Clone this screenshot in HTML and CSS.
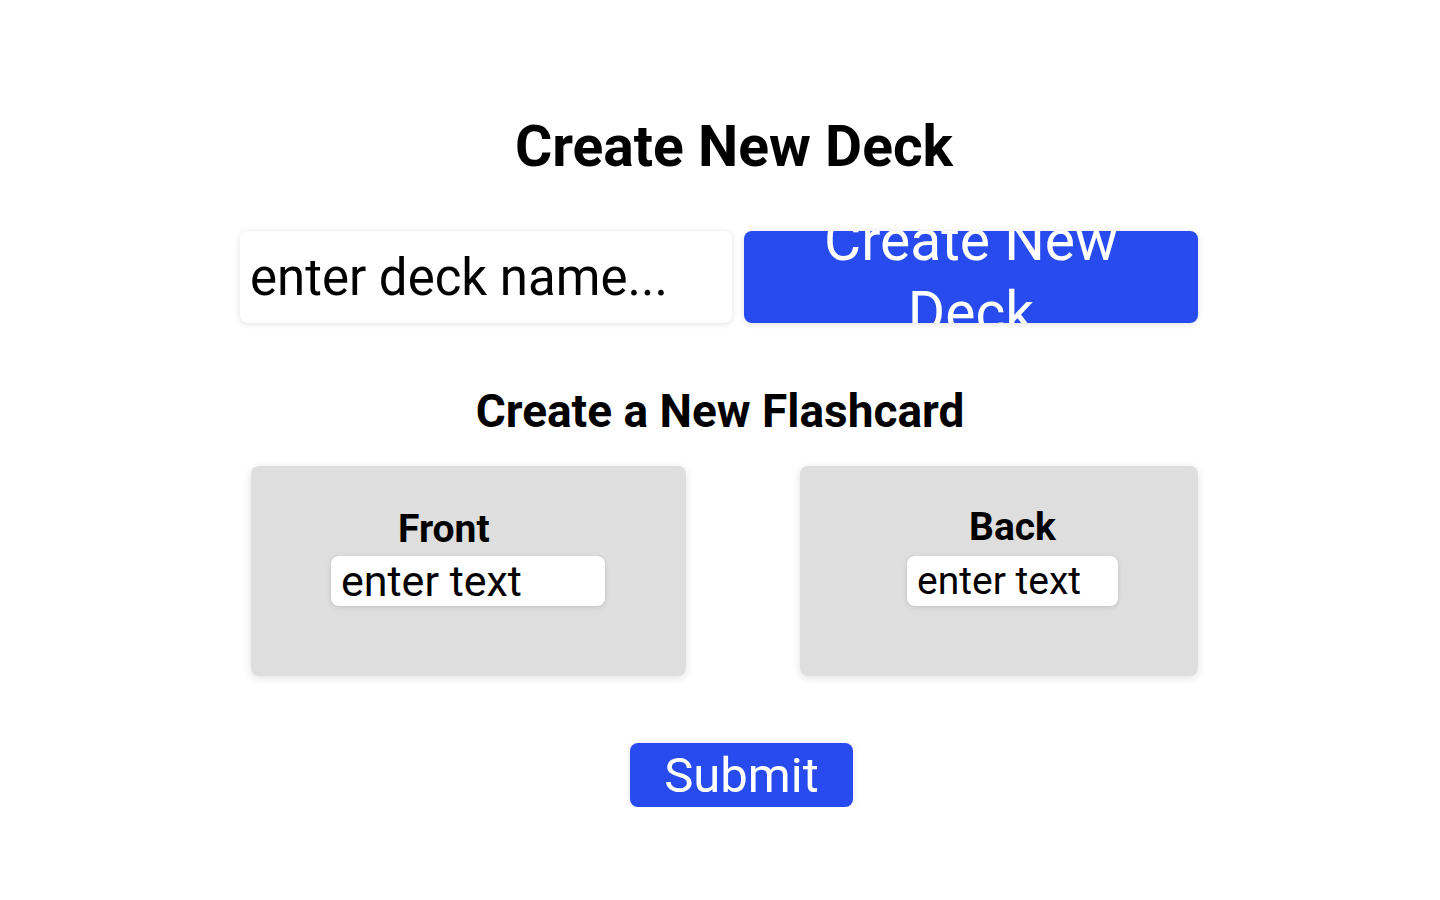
FILE: index.html
```html
<!DOCTYPE html>
<html lang="en">
<head>
<meta charset="utf-8">
<title>Create New Deck</title>
<link rel="stylesheet" href="styles.css">
</head>
<body>
<main class="page">
  <h1 class="title">Create New Deck</h1>
  <div class="deck-row">
    <input class="deck-input" type="text" placeholder="enter deck name...">
    <button class="deck-btn" type="button"><span>Create New Deck</span></button>
  </div>
  <h2 class="subtitle">Create a New Flashcard</h2>
  <div class="cards">
    <div class="card card-front">
      <label class="card-label">Front</label>
      <input class="card-input" type="text" placeholder="enter text">
    </div>
    <div class="card card-back">
      <label class="card-label">Back</label>
      <input class="card-input" type="text" placeholder="enter text">
    </div>
  </div>
  <div class="submit-row">
    <button class="submit-btn" type="button">Submit</button>
  </div>
</main>
</body>
</html>
```
FILE: styles.css
```css
* { box-sizing: border-box; }

html, body {
  margin: 0;
  padding: 0;
  background: #ffffff;
  font-family: Roboto, "Liberation Sans", sans-serif;
  color: #000;
}

.page {
  width: 960px;
  margin: 0 auto;
  padding-top: 113px;
  padding-right: 2px;
}

.title {
  margin: 0;
  padding-left: 30px;
  text-align: center;
  font-size: 57px;
  font-weight: 700;
  line-height: normal;
}

.deck-row {
  display: flex;
  gap: 12px;
  margin-top: 51px;
  height: 92px;
}

.deck-input {
  width: 492px;
  height: 92px;
  border: none;
  border-radius: 8px;
  padding: 0 10px;
  font-family: inherit;
  font-size: 51px;
  color: #000;
  background: #fff;
  box-shadow: 0 1px 6px rgba(0, 0, 0, 0.12);
  outline: none;
}

.deck-input::placeholder,
.card-input::placeholder {
  color: #000;
  opacity: 1;
}

.deck-btn {
  width: 454px;
  height: 92px;
  border: none;
  border-radius: 8px;
  padding: 0 20px;
  background: #284bef;
  color: #fff;
  font-family: inherit;
  font-size: 57px;
  line-height: 72px;
  display: flex;
  align-items: center;
  justify-content: center;
  text-align: center;
  overflow: hidden;
  box-shadow: 0 1px 6px rgba(0, 0, 0, 0.12);
}

.subtitle {
  margin: 61px 0 0;
  padding-left: 2px;
  text-align: center;
  font-size: 46px;
  font-weight: 700;
  line-height: normal;
}

.cards {
  display: flex;
  gap: 114px;
  margin-top: 28px;
  padding-left: 11px;
}

.card {
  height: 210px;
  background: #dedede;
  border-radius: 8px;
  box-shadow: 0 2px 8px rgba(0, 0, 0, 0.12);
  display: flex;
  flex-direction: column;
  padding-top: 40px;
}

.card-front {
  width: 435px;
  padding-left: 80px;
  padding-right: 81px;
}

.card-back {
  width: 398px;
  padding-left: 107px;
  padding-right: 80px;
  padding-top: 38px;
}

.card-label {
  font-size: 39px;
  font-weight: 700;
  line-height: normal;
}

.card-front .card-label {
  padding-left: 67px;
}

.card-back .card-label {
  text-align: center;
  margin-bottom: 2px;
}

.card-input {
  width: 100%;
  height: 50px;
  margin-top: 4px;
  border: none;
  border-radius: 8px;
  padding: 0 10px;
  font-family: inherit;
  font-size: 43px;
  color: #000;
  background: #fff;
  box-shadow: 0 1px 5px rgba(0, 0, 0, 0.12);
  outline: none;
}

.card-back .card-input {
  font-size: 39px;
}

.submit-row {
  display: flex;
  justify-content: center;
  padding-left: 45px;
  margin-top: 67px;
}

.submit-btn {
  height: 64px;
  border: none;
  border-radius: 8px;
  padding: 0 34px;
  background: #284bef;
  color: #fff;
  font-family: inherit;
  font-size: 49px;
  line-height: normal;
  box-shadow: 0 1px 6px rgba(0, 0, 0, 0.12);
}
```
